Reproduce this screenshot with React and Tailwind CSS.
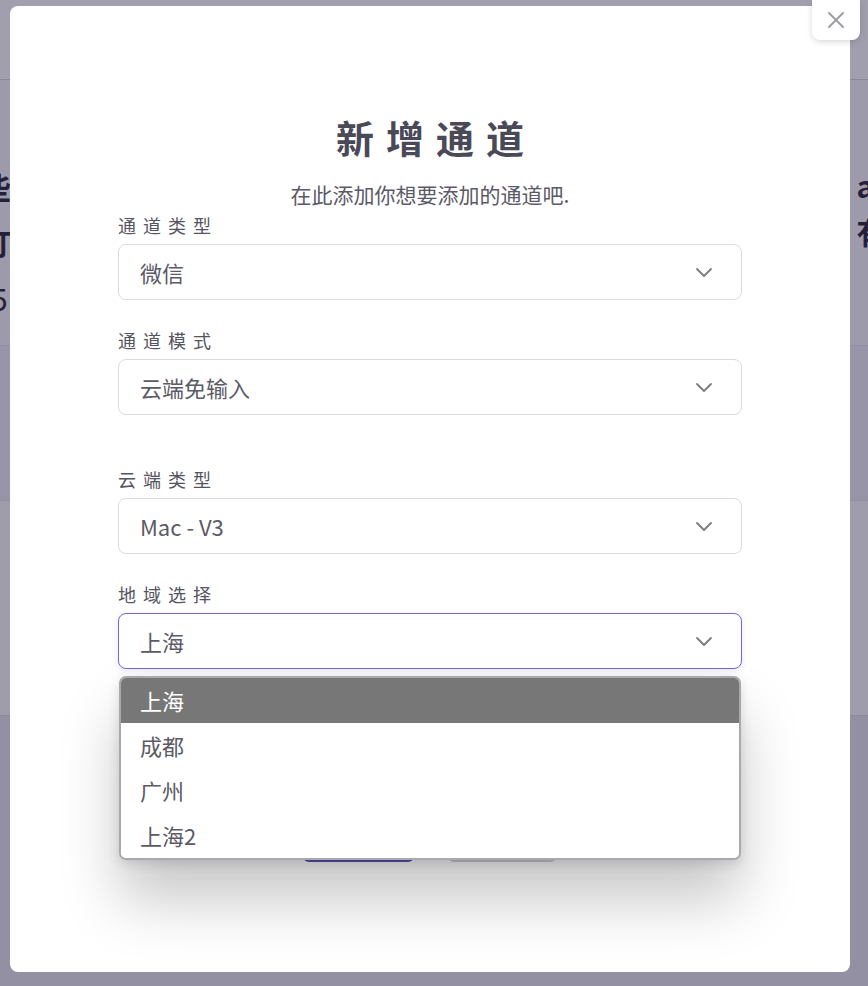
import React from "react";

const font = { fontFamily: '"Noto Sans CJK SC", "Noto Sans", sans-serif' };

function Chevron() {
  return (
    <svg width="18" height="12" viewBox="0 0 18 12" fill="none">
      <polyline points="2,3 9,10 16,3" stroke="#7a7a80" strokeWidth="1.8" strokeLinecap="round" strokeLinejoin="round" />
    </svg>
  );
}

function Field({ label, value, active }) {
  return (
    <div className="flex flex-col">
      <div className="text-[18px] leading-[24px] tracking-[7px] text-[#55545f]">{label}</div>
      <div
        className={
          "mt-[7px] h-[56px] rounded-[8px] bg-white flex items-center justify-between pl-[21px] pr-[28px] border " +
          (active ? "border-[#7467cf] shadow-[0_2px_6px_rgba(116,103,207,0.15)]" : "border-[#dcdce0]")
        }
      >
        <span className="text-[22px] text-[#5b5a66]">{value}</span>
        <Chevron />
      </div>
    </div>
  );
}

export default function App() {
  const items = ["上海", "成都", "广州", "上海2"];
  return (
    <div className="relative w-[868px] h-[986px] overflow-hidden bg-[#ecebf0]" style={font}>
      {/* background page */}
      <div className="flex flex-col h-full">
        <div className="h-[80px] bg-white border-b border-[#d8d8de]"></div>
        <div className="h-[265px] bg-[#f8f8fa] flex justify-between items-start pt-[78px]">
          <div className="-ml-[19px] flex flex-col text-[30px] font-bold leading-[56px] text-[#1c1a2e]">
            <span>些</span>
            <span>订</span>
            <span className="font-normal pl-[10px]">5</span>
          </div>
          <div className="-mr-[22px] flex flex-col text-[30px] font-bold leading-[46px] text-[#1c1a2e] pt-[4px]">
            <span>ac</span>
            <span>有</span>
          </div>
        </div>
        <div className="h-[155px] bg-[#f0eff4] border-t border-[#e0e0e6]"></div>
        <div className="h-[215px] bg-[#fbfbfc] border-t border-[#e0e0e6]"></div>
        <div className="flex-1 bg-[#e6e5ec] border-t border-[#d8d8de]"></div>
      </div>

      {/* overlay */}
      <div className="absolute inset-0 bg-[rgba(46,39,75,0.45)]"></div>

      {/* modal */}
      <div className="absolute left-[10px] top-[6px] w-[840px] h-[966px] bg-white rounded-[8px] flex flex-col items-center pt-[108px]">
        <div className="text-[38px] leading-[46px] font-bold tracking-[12px] pl-[12px] text-[#4a4958]">新增通道</div>
        <div className="mt-[20px] text-[21px] leading-[28px] text-[#5b5a66]">在此添加你想要添加的通道吧.</div>

        <div className="relative w-[624px] mt-[5px] flex flex-col">
          <Field label="通道类型" value="微信" />
          <div className="mt-[28px]">
            <Field label="通道模式" value="云端免输入" />
          </div>
          <div className="mt-[52px]">
            <Field label="云端类型" value="Mac - V3" />
          </div>
          <div className="mt-[28px]">
            <Field label="地域选择" value="上海" active />
          </div>

          <div className="mt-[153px] flex justify-center gap-[34px] pr-[2px]">
            <div className="w-[111px] h-[40px] rounded-[6px] bg-[#5a52b8]"></div>
            <div className="w-[108px] h-[40px] rounded-[6px] bg-[#cfcfd4]"></div>
          </div>

          {/* dropdown list */}
          <div className="absolute left-[1px] right-[1px] top-[463px] rounded-[7px] border-2 border-[#a9a9ad] bg-white overflow-hidden shadow-[0_40px_60px_rgba(0,0,0,0.22),0_4px_12px_rgba(0,0,0,0.12)]">
            {items.map((it, i) => (
              <div
                key={it}
                className={
                  "h-[45px] flex items-center pl-[19px] text-[22px] " +
                  (i === 0 ? "bg-[#777777] text-white" : "bg-white text-[#5b5a66]")
                }
              >
                {it}
              </div>
            ))}
          </div>
        </div>
      </div>

      {/* close button */}
      <div className="absolute left-[812px] top-0 w-[48px] h-[40px] bg-white rounded-b-[8px] shadow-[0_2px_6px_rgba(0,0,0,0.15)] flex items-center justify-center">
        <svg width="18" height="18" viewBox="0 0 18 18" fill="none">
          <path d="M2 2L16 16M16 2L2 16" stroke="#9a9aa0" strokeWidth="1.8" strokeLinecap="round" />
        </svg>
      </div>
    </div>
  );
}
